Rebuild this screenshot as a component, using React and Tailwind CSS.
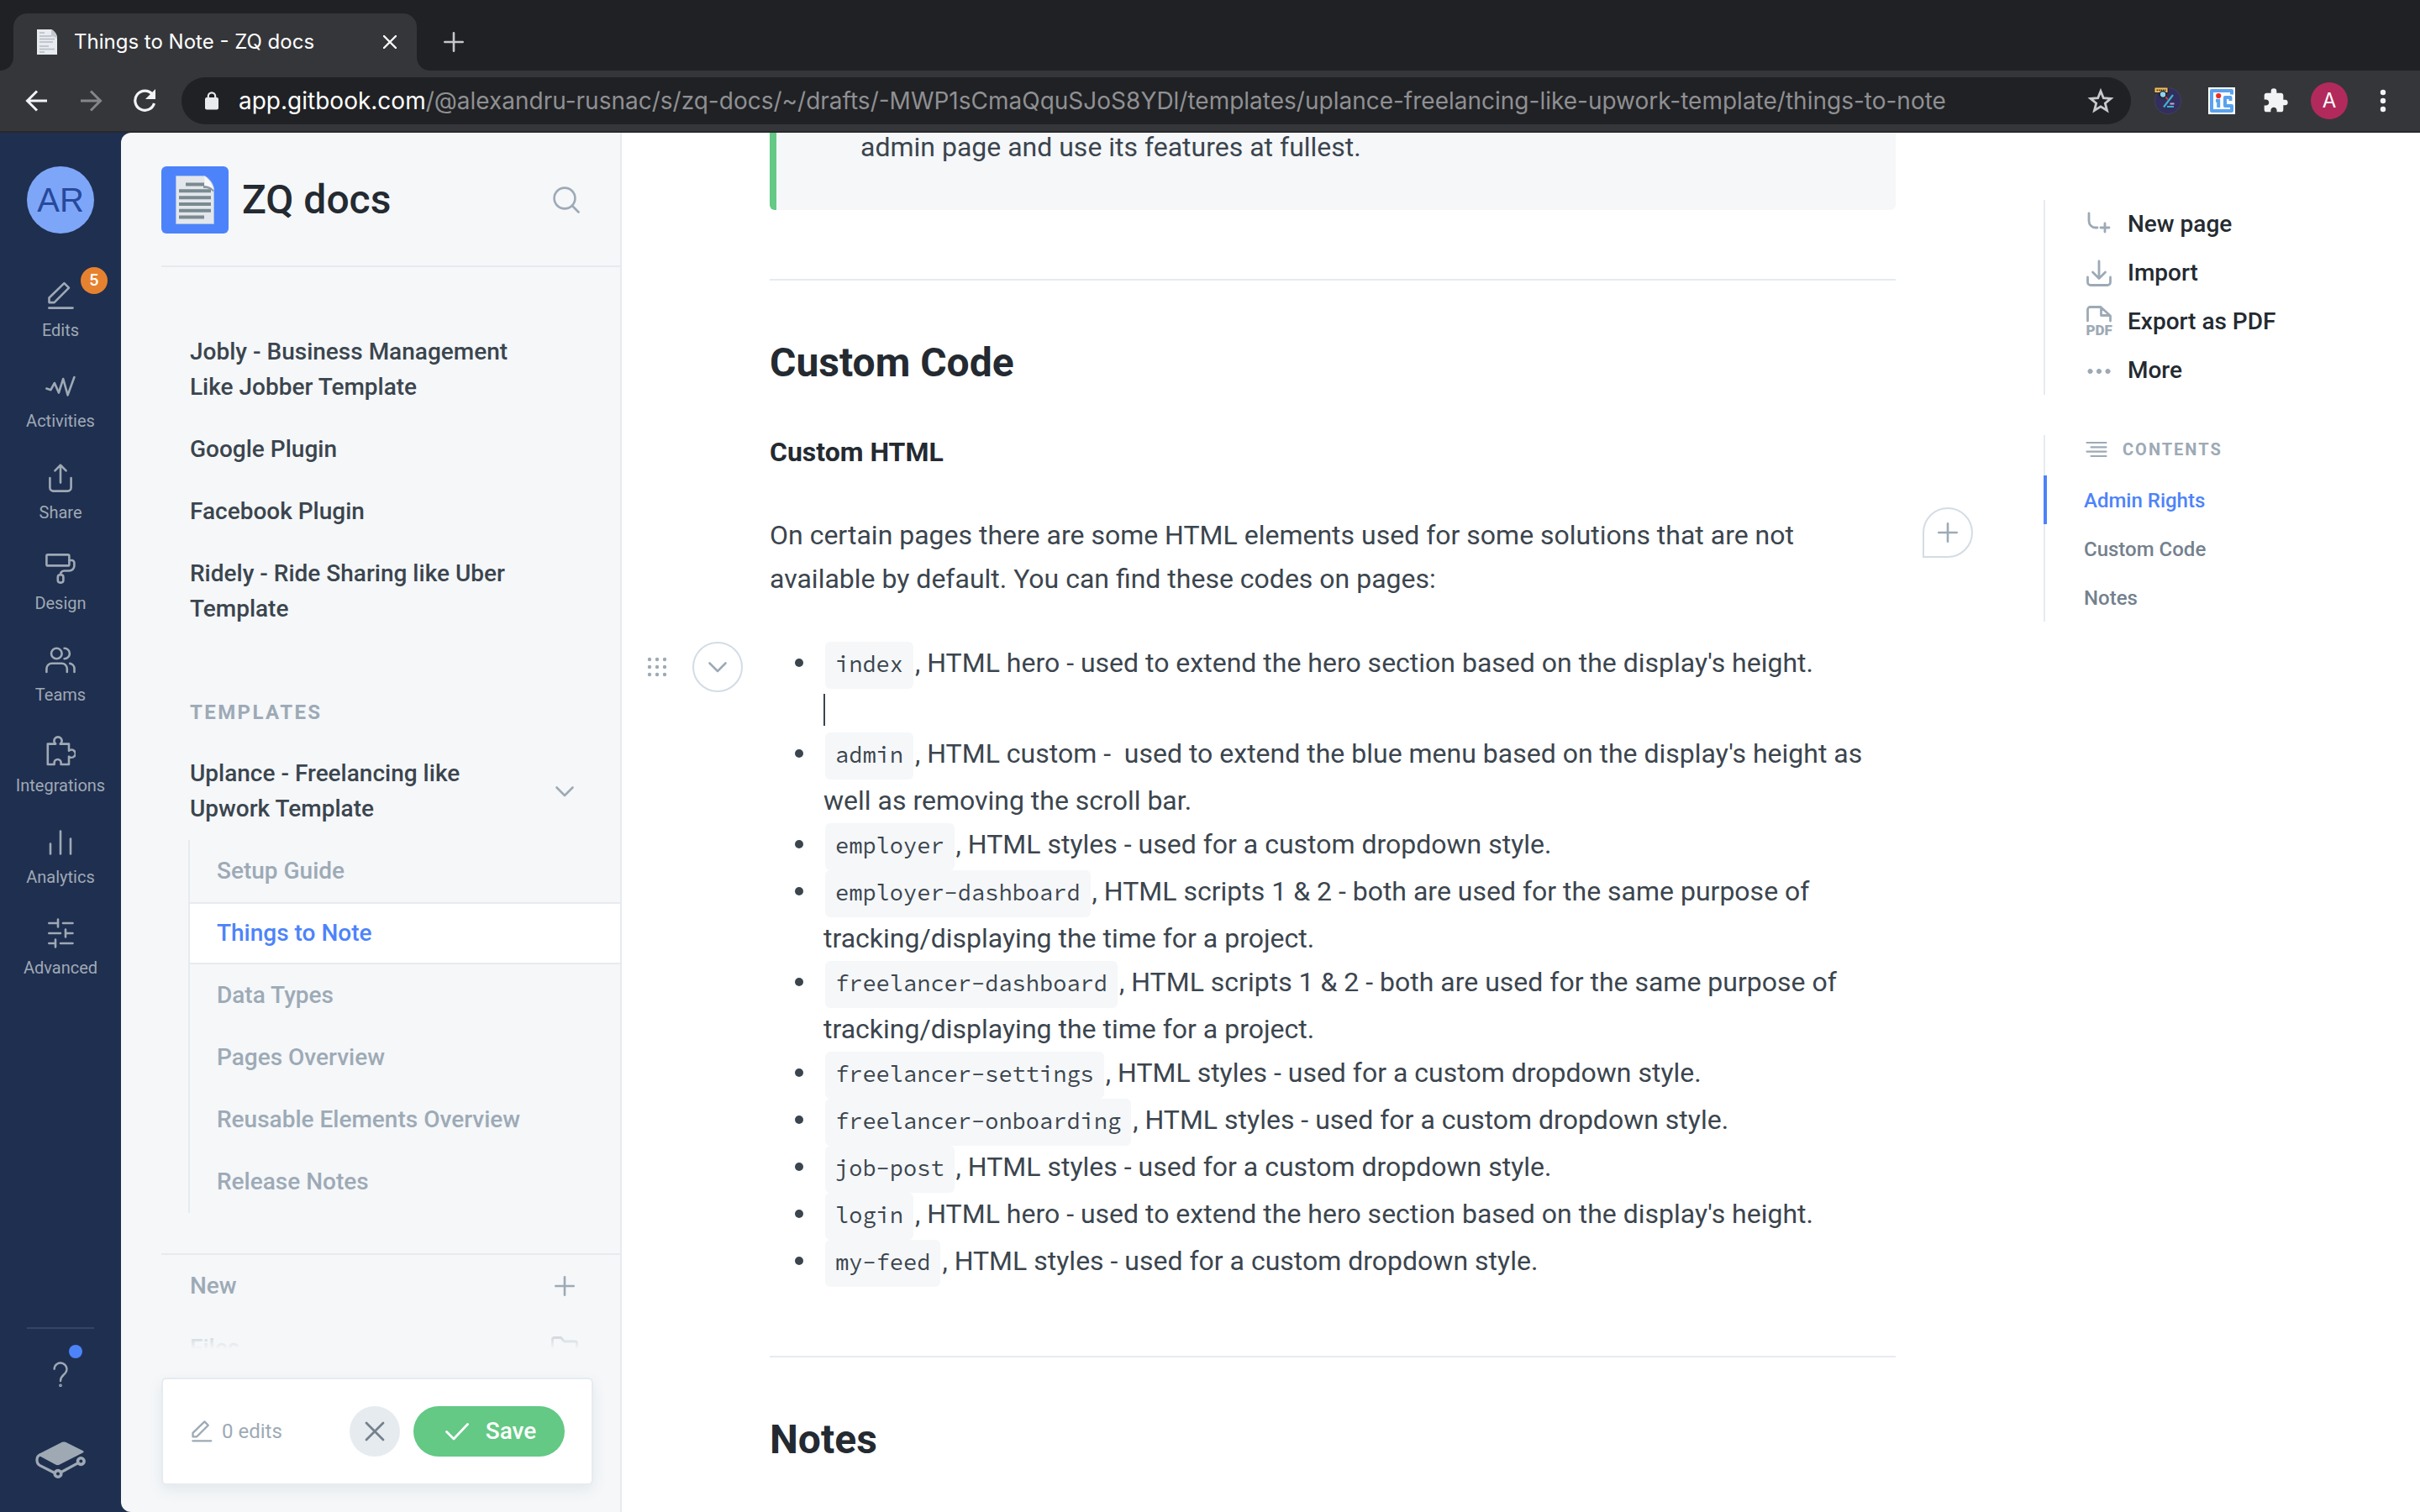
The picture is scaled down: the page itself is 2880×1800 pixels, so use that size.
import React from "react";

/* ---------- icons ---------- */

function Icon({ box = 36, className = "w-9 h-9", width = 2.6, children }) {
  return (
    <svg
      viewBox={`0 0 ${box} ${box}`}
      className={className}
      fill="none"
      stroke="currentColor"
      strokeWidth={width}
      strokeLinecap="round"
      strokeLinejoin="round"
      aria-hidden="true"
    >
      {children}
    </svg>
  );
}

const PencilShape = () => (
  <>
    <path d="M4.3 26.7v-5.6L22.2 3.7l5.6 5.6L10.4 26.7z" transform="translate(0.2 -0.6)" />
    <path d="M4.3 32.6h28.2" />
  </>
);

const PencilIcon = () => (
  <Icon>
    <PencilShape />
  </Icon>
);
const ActivityIcon = () => (
  <Icon>
    <path d="M1.4 20.6l5 1.6 4.5-8.2 5 11.6L21.2 9l5.4 19.4L34.4 7" />
  </Icon>
);
const ShareIcon = () => (
  <Icon>
    <path d="M18 23.6V3M11.4 9.4L18 2.6l6.600 6.800M5.400 18v11.600a4 4 0 0 0 4 4h17.200a4 4 0 0 0 4-4V18" />
  </Icon>
);
const DesignIcon = () => (
  <Icon>
    <rect x="1.400" y="1.400" width="27" height="13" rx="1.500" />
    <path d="M28.400 8h3a3 3 0 0 1 3 3v3.500a6 6 0 0 1-6 6h-6a4.400 4.400 0 0 0-4.400 4.400" />
    <rect x="14.800" y="25.300" width="6.600" height="9.300" rx="2.800" />
  </Icon>
);
const TeamsIcon = () => (
  <Icon>
    <circle cx="13.300" cy="10" r="6.300" />
    <path d="M22.600 3.700a6.300 6.300 0 0 1 0 12.600M1.400 32v-4a6.300 6.300 0 0 1 6.300-6.300H19.500a6.300 6.300 0 0 1 6.300 6.300v4M29.300 21.900a6.300 6.300 0 0 1 5.200 6.200V32" />
  </Icon>
);
const PuzzleIcon = () => (
  <Icon>
    <path d="M2.800 9.600h9.400a4.600 4.600 0 1 1 5.600 0H28v8.200a4.600 4.600 0 1 1 0 6.800V34h-9.400v-2a4 4 0 0 0-8 0v2H2.800z" />
  </Icon>
);
const AnalyticsIcon = () => (
  <Icon>
    <path d="M6 19.500v12M18 4.500v27M30 13.500v18" />
  </Icon>
);
const SlidersIcon = () => (
  <Icon>
    <path d="M4.300 6H15M15 1.500v9M21 6h11.500M4.300 18H18M24 13.500v9M24 18h8.500M4.300 30H12M12 25.500v9M18 30h14.500" />
  </Icon>
);
const PlusIcon = ({ className = "w-6 h-6" }) => (
  <Icon box={24} className={className} width={2.6}>
    <path d="M12 1.300v21.400M1.300 12h21.400" />
  </Icon>
);
const ChevronDown = () => (
  <Icon box={24} className="w-6 h-6" width={2.6}>
    <path d="M2.500 7.500l9.500 9.500 9.500-9.500" />
  </Icon>
);

function GitbookLogo() {
  return (
    <svg viewBox="0 0 60 44" className="h-11 w-[60px]" fill="none" stroke="currentColor" aria-hidden="true">
      <path d="M32 .8Q34 0 36 .8L57 11.300Q58.500 12.300 57 13.300L29 27.600Q26.500 28.800 24 27.500L5 17.200Q3 15.800 5 14.600Z" fill="currentColor" stroke="none" />
      <path d="M6.500 15.500C.4 17.500.8 26 5.500 28.600L24 38M30 37l21-11.300" strokeWidth="3.200" />
      <circle cx="27" cy="38.400" r="3.800" strokeWidth="3.600" />
      <circle cx="54.300" cy="23.600" r="3.800" strokeWidth="3.600" />
    </svg>
  );
}

function DocEmoji() {
  return (
    <svg viewBox="0 0 48 60" className="h-[60px] w-12" aria-hidden="true">
      <path d="M1.500 1.500h34C41 4 46 11 46.500 17v41.500h-45z" fill="#e3e7ec" stroke="#a9bfe8" strokeWidth="1" />
      <path d="M35 1.500C39 4 45 10 46.500 18c-4-3-7.500-3.500-11.500-3.500.8-5 .8-9 0-13z" fill="#f6f8fa" />
      <path d="M34 13c5 0 9 1.500 12.400 5.200l-.4 2.300C42 16.500 38 16 34 16z" fill="#8d99a0" />
      <g stroke="#7a8a90" strokeWidth="4">
        <path d="M13 11.500h22M5 19.300h38M5 27.200h38M5 35h38M5 42.800h38M5 50.600h30" />
      </g>
    </svg>
  );
}

function Favicon() {
  return (
    <svg viewBox="0 0 24 30" className="h-[30px] w-6" aria-hidden="true">
      <path d="M0 0h17c4 2 7 6 7 10v20H0z" fill="#e8ebef" />
      <path d="M17 0c4 2 6.500 6 7 11-2-2-4-2.500-7-2.500z" fill="#c3c8cd" />
      <path d="M3 4h6M3 8h14M3 11.500h18M3 15h16M3 20h11M3 23.500h18M3 27h6" stroke="#b5bcc2" strokeWidth="1.300" />
    </svg>
  );
}

/* ---------- browser chrome ---------- */

function TabStrip() {
  return (
    <div className="flex h-[84px] shrink-0 items-end bg-[#202124] text-white">
      <svg viewBox="0 0 16 16" className="h-4 w-4" aria-hidden="true">
        <path d="M16 0v16H0C9 16 16 9 16 0z" fill="#35363a" />
      </svg>
      <div className="flex h-[68px] w-[480px] items-center rounded-t-2xl bg-[#35363a] pl-7 pr-[18px]">
        <Favicon />
        <span className="ml-5 flex-1 whitespace-nowrap text-2xl">Things to Note - ZQ docs</span>
        <button aria-label="Close tab" className="flex h-7 w-7 items-center justify-center">
          <Icon box={16} className="h-4 w-4" width={2.4}>
            <path d="M1 1l14 14M15 1L1 15" />
          </Icon>
        </button>
      </div>
      <svg viewBox="0 0 16 16" className="h-4 w-4" aria-hidden="true">
        <path d="M0 0v16h16C7 16 0 9 0 0z" fill="#35363a" />
      </svg>
      <button aria-label="New tab" className="ml-4 flex h-[68px] w-6 items-center justify-center text-[#c4c7ca]">
        <PlusIcon />
      </button>
    </div>
  );
}

function ToolSlot({ label, children, className = "text-[#f1f3f4]" }) {
  return (
    <button aria-label={label} className={`flex h-14 w-16 shrink-0 items-center justify-center ${className}`}>
      {children}
    </button>
  );
}

function Toolbar() {
  return (
    <div className="flex h-[74px] shrink-0 items-center border-b-2 border-[#28292c] bg-[#35363a] px-3">
      <ToolSlot label="Back">
        <Icon box={28} className="h-7 w-7" width={3}>
          <path d="M26 14H2.500M14 2.500L2.500 14 14 25.500" strokeLinecap="butt" strokeLinejoin="miter" />
        </Icon>
      </ToolSlot>
      <ToolSlot label="Forward" className="text-[#85868a]">
        <Icon box={28} className="h-7 w-7" width={3}>
          <path d="M2 14h23.500M14 2.500L25.500 14 14 25.500" strokeLinecap="butt" strokeLinejoin="miter" />
        </Icon>
      </ToolSlot>
      <ToolSlot label="Reload">
        <svg viewBox="0 0 28 28" className="h-7 w-7" fill="none" stroke="currentColor" strokeWidth="3.200" aria-hidden="true">
          <path d="M23.500 6.500A11.600 11.600 0 1 0 25.500 17" />
          <path d="M27 0v12H15z" fill="currentColor" stroke="none" />
        </svg>
      </ToolSlot>
      <div className="ml-3 flex h-14 min-w-0 flex-1 items-center rounded-full bg-[#202124] pl-7 pr-5">
        <svg viewBox="0 0 16 22" className="h-[22px] w-4 shrink-0 text-[#e8eaed]" fill="none" aria-hidden="true">
          <rect x="0" y="7" width="16" height="14.500" rx="2" fill="currentColor" />
          <path d="M3.800 8V5.500a4.200 4.200 0 0 1 8.400 0V8" stroke="currentColor" strokeWidth="2.200" />
        </svg>
        <div role="textbox" aria-label="Address" className="ml-6 min-w-0 flex-1 overflow-hidden whitespace-nowrap text-[28px] leading-10 text-[#8f9093]">
          <span className="text-white">app.gitbook.com</span>
          /@alexandru-rusnac/s/zq-docs/~/drafts/-MWP1sCmaQquSJoS8YDl/templates/uplance-freelancing-like-upwork-template/things-to-note
        </div>
        <button aria-label="Bookmark" className="text-[#c8c9cb]">
          <svg viewBox="0 0 32 32" className="h-8 w-8" fill="none" stroke="currentColor" strokeWidth="2.800" aria-hidden="true">
            <path d="M16 4.500l3.300 8.200 8.700.6-6.700 5.600 2.200 8.600-7.500-4.700-7.500 4.700 2.200-8.600L4 13.300l8.700-.6z" />
          </svg>
        </button>
      </div>
      <div className="w-3 shrink-0" />
      <ToolSlot label="Inspector extension">
        <svg viewBox="0 0 32 32" className="h-8 w-8" aria-hidden="true">
          <circle cx="16" cy="16" r="15.700" fill="#322f5c" stroke="#4a4a63" strokeWidth=".6" />
          <path d="M22 9L11 23.500" stroke="#3fb0cc" strokeWidth="2.200" />
          <path d="M15 23h8" stroke="#3fb0cc" strokeWidth="2" />
          <path d="M18.500 19.500h5" stroke="#c9a8dd" strokeWidth="2" />
          <rect x="0" y="0" width="16" height="6.500" fill="#f0bf63" stroke="#15120c" strokeWidth=".8" />
          <path d="M2.500 3.400h11" stroke="#3b2d12" strokeWidth="1.800" strokeDasharray="1.600 .8" />
          <path d="M12.500 10.500l3.500 4" stroke="#d8402d" strokeWidth="1.800" />
          <circle cx="10" cy="8.500" r="3.900" fill="#8fd3ee" stroke="#15222b" strokeWidth="1.400" />
        </svg>
      </ToolSlot>
      <ToolSlot label="iC extension">
        <svg viewBox="0 0 32 32" className="h-8 w-8" aria-hidden="true">
          <rect width="32" height="32" fill="#fff" />
          <path d="M28 8.500V4H4v24h24v-6h-8V12h6.500v4" fill="none" stroke="#5aa2ee" strokeWidth="4" strokeLinejoin="round" />
          <path d="M9 15.800h3.200V24" fill="none" stroke="#5aa2ee" strokeWidth="4" />
          <circle cx="12.200" cy="10" r="3.100" fill="#ee2d24" />
        </svg>
      </ToolSlot>
      <ToolSlot label="Extensions">
        <svg viewBox="0 0 24 24" className="h-8 w-8" fill="currentColor" aria-hidden="true">
          <path d="M20.500 11H19V7c0-1.100-.9-2-2-2h-4V3.500a2.500 2.500 0 0 0-5 0V5H4c-1.100 0-1.990.9-1.990 2v3.800H3.500c1.490 0 2.700 1.210 2.700 2.700s-1.210 2.700-2.700 2.700H2V20c0 1.100.9 2 2 2h3.800v-1.500c0-1.490 1.210-2.700 2.700-2.700s2.700 1.210 2.700 2.700V22H17c1.100 0 2-.9 2-2v-4h1.500a2.500 2.500 0 0 0 0-5z" />
        </svg>
      </ToolSlot>
      <ToolSlot label="Profile">
        <span className="flex h-11 w-11 items-center justify-center rounded-full bg-[#b12a5b] text-2xl text-white">A</span>
      </ToolSlot>
      <ToolSlot label="Menu">
        <svg viewBox="0 0 8 28" className="h-7 w-2" fill="currentColor" aria-hidden="true">
          <circle cx="4" cy="4" r="3.200" />
          <circle cx="4" cy="14" r="3.200" />
          <circle cx="4" cy="24" r="3.200" />
        </svg>
      </ToolSlot>
    </div>
  );
}

/* ---------- app rail ---------- */

const RAIL = [
  ["Edits", PencilIcon, 5],
  ["Activities", ActivityIcon],
  ["Share", ShareIcon],
  ["Design", DesignIcon],
  ["Teams", TeamsIcon],
  ["Integrations", PuzzleIcon],
  ["Analytics", AnalyticsIcon],
  ["Advanced", SlidersIcon],
];

function Rail() {
  return (
    <div className="flex w-36 shrink-0 flex-col items-center pb-10 pt-10 text-[#9fa9b4]">
      <button className="flex h-20 w-20 items-center justify-center rounded-full bg-[#7ea6f8] font-['Liberation_Sans',sans-serif] text-[40px] leading-none text-[#27499b]">
        AR
      </button>
      <nav className="mt-14 flex h-[830px] flex-col items-center justify-between">
        {RAIL.map(([label, Glyph, count]) => (
          <a key={label} href="#" className="relative flex w-36 flex-col items-center gap-[11px] text-xl leading-6">
            <Glyph />
            <span>{label}</span>
            {count && (
              <span className="absolute -top-4 right-4 flex h-8 w-8 items-center justify-center rounded-full bg-[#e6822f] font-['Inter',sans-serif] text-lg font-semibold text-white">
                {count}
              </span>
            )}
          </a>
        ))}
      </nav>
      <div className="mt-auto h-0.5 w-20 bg-[#344567]" />
      <button aria-label="Help" className="relative mt-[39px] flex h-[30px] w-8 justify-center">
        <Icon box={30} className="h-[30px] w-[30px]" width={2.4}>
          <path d="M7.600 8.800a7.400 7.400 0 1 1 12.800 5.200c-2.600 2.700-5.400 4-5.400 9" />
          <circle cx="15" cy="28.300" r=".7" />
        </Icon>
        <span className="absolute -right-2.5 -top-5 h-4 w-4 rounded-full bg-[#4d83fa]" />
      </button>
      <a href="#" aria-label="GitBook" className="mt-[65px]">
        <GitbookLogo />
      </a>
    </div>
  );
}

/* ---------- page tree ---------- */

const PAGES = [
  "Jobly - Business Management Like Jobber Template",
  "Google Plugin",
  "Facebook Plugin",
  "Ridely - Ride Sharing like Uber Template",
];
const SUBPAGES = [
  "Setup Guide",
  "Things to Note",
  "Data Types",
  "Pages Overview",
  "Reusable Elements Overview",
  "Release Notes",
];

function Sidebar() {
  return (
    <div className="flex w-[596px] shrink-0 flex-col rounded-l-xl border-r-2 border-[#e6ebf0] bg-[#f5f7f9]">
      <div className="ml-12 flex items-center border-b-2 border-[#e6ebf0] pb-[38px] pr-12 pt-10">
        <span className="flex h-20 w-20 items-center justify-center rounded-md bg-[#4d83fa]">
          <DocEmoji />
        </span>
        <span className="ml-4 flex-1 text-5xl font-medium text-[#242a31]">ZQ docs</span>
        <button aria-label="Search" className="text-[#9daab6]">
          <Icon box={32} className="h-8 w-8" width={2.6}>
            <circle cx="14" cy="14" r="12.400" />
            <path d="M23 23l7.500 7.500" />
          </Icon>
        </button>
      </div>

      <div className="relative min-h-0 flex-1 overflow-hidden">
        <nav className="pl-20 pt-16 text-[28px] font-medium leading-[42px] text-[#3b454e]">
          {PAGES.map((p) => (
            <a key={p} href="#" className="block py-4 pl-0.5 pr-[120px]">
              {p}
            </a>
          ))}
          <h2 className="mb-5 mt-[70px] pl-0.5 text-2xl font-bold leading-8 tracking-widest text-[#9daab6]">TEMPLATES</h2>
          <a href="#" className="flex items-center py-4 pl-0.5 pr-[54px]">
            <span className="w-[380px] flex-1 pr-20">Uplance - Freelancing like Upwork Template</span>
            <span className="text-[#9daab6]">
              <ChevronDown />
            </span>
          </a>
          <ul className="border-l-2 border-[#e6ebf0] text-[#9daab6]">
            {SUBPAGES.map((p) =>
              p === "Things to Note" ? (
                <li key={p}>
                  <a href="#" aria-current="page" className="block border-y-2 border-[#e6ebf0] bg-white py-3.5 pl-8 text-[#4d83fa]">
                    {p}
                  </a>
                </li>
              ) : (
                <li key={p}>
                  <a href="#" className="block py-4 pl-8">
                    {p}
                  </a>
                </li>
              )
            )}
          </ul>
        </nav>
        <div className="ml-12 mt-12 border-t-2 border-[#e6ebf0] pl-[34px] pr-[54px] text-[28px] font-medium leading-[42px] text-[#9daab6]">
          <button className="flex w-full items-center justify-between py-4">
            New
            <PlusIcon />
          </button>
          <button className="flex w-full items-center justify-between py-4">
            Files
            <Icon className="-mr-1 h-8 w-8" box={32} width={2.8}>
              <path d="M1.500 5.500a2 2 0 0 1 2-2h8l4 4.500h13a2 2 0 0 1 2 2v16a2 2 0 0 1-2 2h-25a2 2 0 0 1-2-2z" />
            </Icon>
          </button>
        </div>
        <div className="pointer-events-none absolute inset-x-0 bottom-0 h-9 bg-linear-to-t from-[#f5f7f9] to-[#f5f7f9]/0" />
      </div>

      <div className="mb-8 ml-12 mr-8 mt-[34px] flex h-32 shrink-0 items-center rounded-md border-2 border-[#e6ebf0] bg-white pl-8 pr-8 shadow-[0_6px_16px_rgba(116,129,141,0.12)]">
        <span className="flex items-center gap-2.5 text-2xl text-[#9daab6]">
          <Icon className="h-7 w-7" width={3}>
            <PencilShape />
          </Icon>
          0 edits
        </span>
        <button aria-label="Discard" className="ml-auto flex h-[60px] w-[60px] items-center justify-center rounded-full bg-[#e6ebf0] text-[#74818d]">
          <Icon box={24} className="h-6 w-6" width={2.8}>
            <path d="M2 2l20 20M22 2L2 22" />
          </Icon>
        </button>
        <button className="ml-4 flex h-[60px] w-[180px] items-center justify-center gap-5 rounded-full bg-[#63c984] pl-1 text-[28px] font-medium text-white">
          <Icon box={28} className="h-7 w-7" width={2.8}>
            <path d="M1.500 14.500l8.500 8.500L26.500 5.500" />
          </Icon>
          Save
        </button>
      </div>
    </div>
  );
}

/* ---------- editor ---------- */

const ITEMS = [
  { code: "index", text: ", HTML hero - used to extend the hero section based on the display's height.", caret: true },
  { code: "admin", text: ", HTML custom - \u00a0used to extend the blue menu based on the display's height as well as removing the scroll bar.", two: true },
  { code: "employer", text: ", HTML styles - used for a custom dropdown style." },
  { code: "employer-dashboard", text: ", HTML scripts 1 & 2 - both are used for the same purpose of tracking/displaying the time for a project.", two: true },
  { code: "freelancer-dashboard", text: ", HTML scripts 1 & 2 - both are used for the same purpose of tracking/displaying the time for a project.", two: true },
  { code: "freelancer-settings", text: ", HTML styles - used for a custom dropdown style." },
  { code: "freelancer-onboarding", text: ", HTML styles - used for a custom dropdown style." },
  { code: "job-post", text: ", HTML styles - used for a custom dropdown style." },
  { code: "login", text: ", HTML hero - used to extend the hero section based on the display's height." },
  { code: "my-feed", text: ", HTML styles - used for a custom dropdown style." },
];

function Rule() {
  return <hr className="mt-[82px] border-t-2 border-[#e6ebf0]" />;
}

function Heading({ children }) {
  return <h2 className="mt-[68px] text-5xl font-bold leading-[60px] text-[#242a31]">{children}</h2>;
}

function Editor() {
  return (
    <main className="mx-44 min-w-0 flex-1 text-[32px] text-[#3b454e]">
      <div className="rounded-b-md border-l-8 border-[#63c984] bg-[#f5f7f9] pb-[58px] pl-[100px] leading-[34px]">
        admin page and use its features at fullest.
      </div>
      <Rule />
      <Heading>Custom Code</Heading>
      <h3 className="mt-14 font-bold leading-10 text-[#242a31]">Custom HTML</h3>
      <div className="-mr-[92px] mt-[53px] flex gap-8">
        <p className="flex-1 leading-[52px]">
          On certain pages there are some HTML elements used for some solutions that are not available by default. You can
          find these codes on pages:
        </p>
        <button aria-label="Comment" className="-mt-[7px] flex h-[60px] w-[60px] items-center justify-center rounded-full rounded-bl-none border-2 border-[#d3dce6] text-[#9daab6]">
          <PlusIcon />
        </button>
      </div>
      <div className="-ml-[146px] mt-[49px] flex">
        <button aria-label="Drag block" className="flex h-[60px] w-6 items-center text-[#9daab6]">
          <svg viewBox="0 0 24 24" className="h-6 w-6" fill="currentColor" aria-hidden="true">
            {[3, 12, 21].map((y) => [3, 12, 21].map((x) => <circle key={`${x}-${y}`} cx={x} cy={y} r="2.200" />))}
          </svg>
        </button>
        <button aria-label="Block options" className="ml-[30px] mr-8 flex h-[60px] w-[60px] items-center justify-center rounded-full border-2 border-[#d3dce6] text-[#9daab6]">
          <ChevronDown />
        </button>
        <ul className="flex-1">
          {ITEMS.map((it) => (
            <li key={it.code} className="flex">
              <span className="w-16 shrink-0 pl-[30px] pt-5">
                <span className="block h-2.5 w-2.5 rounded-full bg-[#3b454e]" />
              </span>
              <div className={it.two ? "flex-1 pb-0.5 leading-[50px]" : "flex-1 leading-[50px]"}>
                <code className="mx-0.5 inline-block h-14 rounded-md bg-[#f5f7f9] px-3 font-['Source_Code_Pro','Liberation_Mono',monospace] text-[27px] leading-[52px]">
                  {it.code}
                </code>
                {it.text}
                {it.caret && (
                  <div className="h-[52px] pt-1.5">
                    <div className="h-[38px] w-0.5 bg-[#3b454e]" />
                  </div>
                )}
              </div>
            </li>
          ))}
        </ul>
      </div>
      <Rule />
      <Heading>Notes</Heading>
    </main>
  );
}

/* ---------- right column ---------- */

const ACTIONS = [
  [
    "New page",
    <Icon key="n" className="h-9 w-9" width={2.8}>
      <path d="M6 5v9a8 8 0 0 0 8 8h2M20 22h10M25 17v10" />
    </Icon>,
  ],
  [
    "Import",
    <Icon key="i" className="h-9 w-9" width={2.8}>
      <path d="M18 4v20M10.500 17L18 24.500 25.500 17M4.500 23v6a3.500 3.500 0 0 0 3.500 3.500h20a3.500 3.500 0 0 0 3.500-3.500v-6" />
    </Icon>,
  ],
  [
    "Export as PDF",
    <svg key="e" viewBox="0 0 36 42" className="h-[42px] w-9" fill="none" stroke="currentColor" strokeWidth="2.800" strokeLinecap="round" strokeLinejoin="round" aria-hidden="true">
      <path d="M4.500 20V6.500a3 3 0 0 1 3-3H20L31.500 14v6M20.500 4v9.500h10" />
      <text x="2.500" y="37" fontSize="17" fontWeight="900" fontFamily="Roboto, sans-serif" fill="currentColor" stroke="none">
        PDF
      </text>
    </svg>,
  ],
  [
    "More",
    <Icon key="m" className="h-9 w-9" width={1}>
      <g fill="currentColor">
        <circle cx="7.500" cy="19" r="2.600" />
        <circle cx="18" cy="19" r="2.600" />
        <circle cx="28.500" cy="19" r="2.600" />
      </g>
    </Icon>,
  ],
];

function Aside() {
  return (
    <aside className="w-[448px] shrink-0 pt-20">
      <div className="border-l-2 border-[#e6ebf0]">
        {ACTIONS.map(([label, glyph]) => (
          <button key={label} className="flex h-[58px] items-center gap-4 pl-[46px] text-[28px] font-medium text-[#242a31]">
            <span className="text-[#9daab6]">{glyph}</span>
            {label}
          </button>
        ))}
      </div>
      <nav className="mt-12 border-l-2 border-[#e6ebf0] text-2xl font-medium text-[#74818d]">
        <h2 className="flex h-12 items-center gap-[18px] pb-3.5 pl-12 text-xl font-bold tracking-widest text-[#9daab6]">
          <Icon box={26} className="h-[26px] w-[26px]" width={2.2}>
            <path d="M1.500 5h23M6.500 10.300h18M1.500 15.600h23M6.500 21h18" />
          </Icon>
          CONTENTS
        </h2>
        <a href="#" className="-ml-0.5 flex h-[58px] items-center border-l-4 border-[#4d83fa] pl-11 pt-0.5 text-[#4d83fa]">
          Admin Rights
        </a>
        <a href="#" className="flex h-[58px] items-center pl-[46px] pt-0.5">
          Custom Code
        </a>
        <a href="#" className="flex h-[58px] items-center pl-[46px] pt-0.5">
          Notes
        </a>
      </nav>
    </aside>
  );
}

export default function App() {
  return (
    <div className="flex h-screen flex-col overflow-hidden bg-white">
      <header className="font-['Inter',sans-serif]">
        <TabStrip />
        <Toolbar />
      </header>
      <div className="flex min-h-0 flex-1 overflow-hidden font-['Roboto',sans-serif]">
        <div className="flex shrink-0 bg-[#1f2f50]">
          <Rail />
          <Sidebar />
        </div>
        <Editor />
        <Aside />
      </div>
    </div>
  );
}
